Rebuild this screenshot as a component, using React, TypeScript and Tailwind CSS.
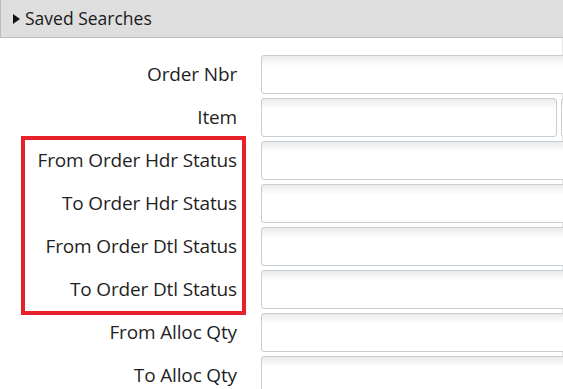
import React from 'react';

const fields = [
  'Order Nbr',
  'Item',
  'From Order Hdr Status',
  'To Order Hdr Status',
  'From Order Dtl Status',
  'To Order Dtl Status',
  'From Alloc Qty',
  'To Alloc Qty',
];

const inputCls =
  'h-[39px] rounded-[3px] border border-[#c5cdd5] bg-[linear-gradient(to_bottom,#ebebeb_0px,#ffffff_10px,#ffffff_100%)]';

const FieldRow: React.FC<{ label: string }> = ({ label }) => (
  <div className="flex items-center h-[43px]">
    <div className="w-[237px] shrink-0 text-right text-[19px] tracking-[-0.15px] text-[#1f1f1f]">{label}</div>
    <div className="ml-[24px] flex gap-[4px] flex-1">
      {label === 'Item' ? (
        <>
          <div className={`${inputCls} w-[296px] shrink-0`} />
          <div className={`${inputCls} w-[40px] shrink-0`} />
        </>
      ) : (
        <div className={`${inputCls} w-[320px] shrink-0`} />
      )}
    </div>
  </div>
);

export default function App() {
  return (
    <div
      className="relative w-[563px] h-[389px] overflow-hidden bg-white"
      style={{ fontFamily: '"Open Sans", "Noto Sans", sans-serif' }}
    >
      <div className="h-[38px] flex items-center gap-[5px] pl-[12px] bg-[#dedede] border-l border-b border-[#bdbdbd]">
        <svg width="7" height="10" viewBox="0 0 7 10" className="mt-[1px]">
          <path d="M0 0 L7 5 L0 10 Z" fill="#111" />
        </svg>
        <span className="text-[17.5px] text-[#1a1a1a]">Saved Searches</span>
      </div>
      <div className="pt-[15px] border-r border-[#e6e6e6] h-full">
        {fields.map(f => (
          <FieldRow key={f} label={f} />
        ))}
      </div>
      <div className="absolute left-[21px] top-[136px] w-[225px] h-[179px] border-[4px] border-[#e8202a]" />
    </div>
  );
}
